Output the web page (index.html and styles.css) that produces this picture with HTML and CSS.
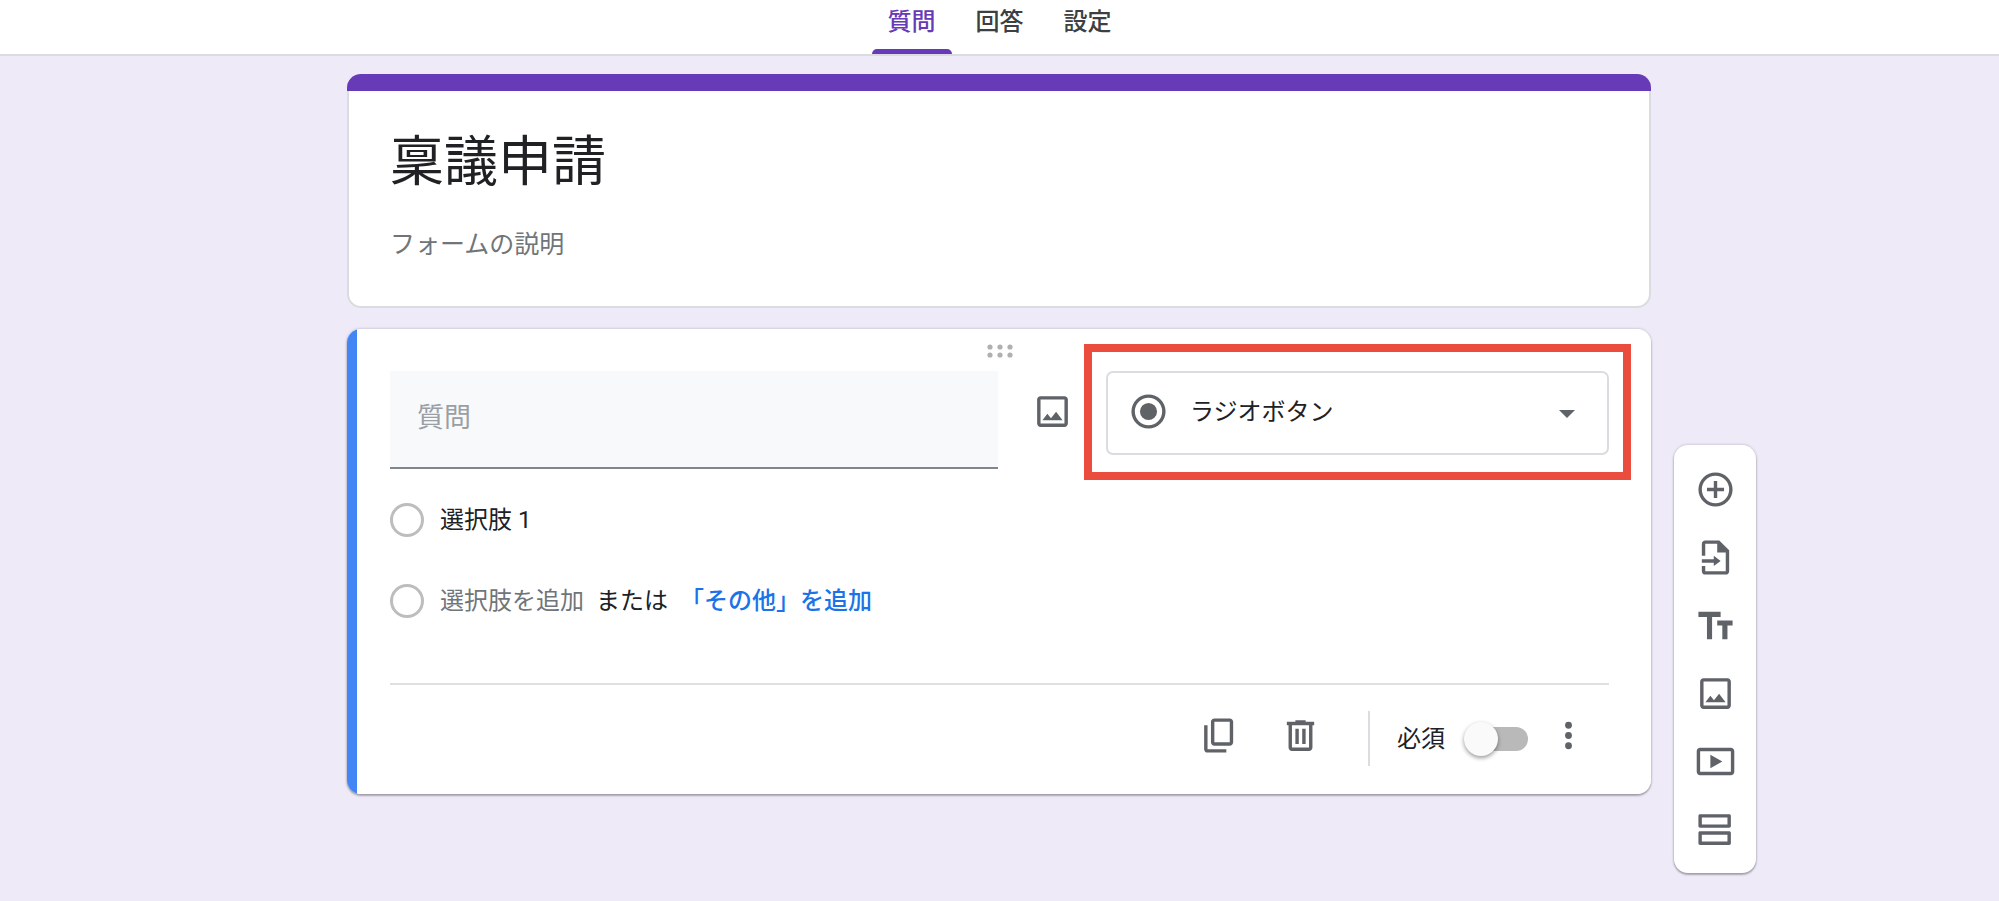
FILE: index.html
```html
<!DOCTYPE html>
<html lang="ja">
<head>
<meta charset="utf-8">
<meta name="viewport" content="width=device-width, initial-scale=1">
<title>稟議申請</title>
<link rel="stylesheet" href="styles.css">
</head>
<body>
<header class="topbar">
  <nav class="tabs">
    <a class="tab tab-active" href="#questions">質問</a>
    <a class="tab" href="#responses">回答</a>
    <a class="tab" href="#settings">設定</a>
  </nav>
</header>

<main class="editor">
  <section class="card title-card">
    <div class="title-stripe"></div>
    <div class="title-body">
      <h1 class="form-title">稟議申請</h1>
      <input class="form-description" type="text" placeholder="フォームの説明" aria-label="フォームの説明">
    </div>
  </section>

  <section class="card question-card">
    <svg class="drag-handle" viewBox="0 0 26 14" aria-hidden="true">
      <circle cx="3" cy="3" r="2.6"/><circle cx="13" cy="3" r="2.6"/><circle cx="23" cy="3" r="2.6"/>
      <circle cx="3" cy="11" r="2.6"/><circle cx="13" cy="11" r="2.6"/><circle cx="23" cy="11" r="2.6"/>
    </svg>

    <div class="question-row">
      <input class="question-input" type="text" placeholder="質問" aria-label="質問">
      <button class="icon-button image-button" type="button" aria-label="画像を追加">
        <svg class="icon" viewBox="0 0 24 24"><path d="M19 5v14H5V5h14m0-2H5c-1.1 0-2 .9-2 2v14c0 1.1.9 2 2 2h14c1.1 0 2-.9 2-2V5c0-1.1-.9-2-2-2zM14.1 12.2l-3 3.8L9 13.3 6.1 17.1h11.8z"/></svg>
      </button>
      <div class="type-field">
        <select class="type-select" aria-label="質問の形式">
          <option>ラジオボタン</option>
        </select>
        <svg class="icon type-icon" viewBox="0 0 24 24" aria-hidden="true"><path d="M12 2a10 10 0 1 0 0 20 10 10 0 0 0 0-20zm0 18a8 8 0 1 1 0-16 8 8 0 0 1 0 16z"/><circle cx="12" cy="12" r="5"/></svg>
        <svg class="type-caret" viewBox="0 0 16 8" aria-hidden="true"><path d="M0 0h16L8 8z"/></svg>
        <span class="type-highlight"></span>
      </div>
    </div>

    <div class="options">
      <div class="option">
        <input class="option-radio" type="radio" name="option" aria-label="選択肢 1" disabled>
        <input class="option-text" type="text" value="選択肢 1" aria-label="選択肢">
      </div>
      <div class="option">
        <input class="option-radio" type="radio" name="option" aria-label="選択肢を追加" disabled>
        <button class="add-option" type="button">選択肢を追加</button>
        <span>または</span>
        <button class="add-other" type="button">「その他」を追加</button>
      </div>
    </div>

    <footer class="question-footer">
      <button class="icon-button copy-button" type="button" aria-label="コピーを作成">
        <svg class="icon" viewBox="0 0 24 24"><path d="M18 2H9c-1.100 0-2 .9-2 2v12c0 1.100.9 2 2 2h9c1.100 0 2-.9 2-2V4c0-1.100-.9-2-2-2zm0 14H9V4h9v12zM5 6H3v14c0 1.100.9 2 2 2h11v-2H5z"/></svg>
      </button>
      <button class="icon-button delete-button" type="button" aria-label="削除">
        <svg class="icon" viewBox="0 0 24 24"><path d="M15 4V3H9v1H4v2h1v13c0 1.100.9 2 2 2h10c1.100 0 2-.9 2-2V6h1V4h-5zm2 15H7V6h10v13zM9 8h2v9H9zm4 0h2v9h-2z"/></svg>
      </button>
      <span class="footer-divider"></span>
      <label class="required">
        必須
        <input class="switch" type="checkbox" role="switch">
      </label>
      <button class="icon-button" type="button" aria-label="その他のオプション">
        <svg class="icon" viewBox="0 0 24 24"><circle cx="12" cy="6" r="2"/><circle cx="12" cy="12" r="2"/><circle cx="12" cy="18" r="2"/></svg>
      </button>
    </footer>
  </section>

  <aside class="toolbar" aria-label="ツールバー">
    <button class="tool" type="button" aria-label="質問を追加">
      <svg class="icon" viewBox="0 0 24 24"><path d="M13 7h-2v4H7v2h4v4h2v-4h4v-2h-4zM12 2a10 10 0 1 0 0 20 10 10 0 0 0 0-20zm0 18a8 8 0 1 1 0-16 8 8 0 0 1 0 16z"/></svg>
    </button>
    <button class="tool" type="button" aria-label="質問をインポート">
      <svg class="icon" viewBox="0 0 24 24"><path d="M4 11V4c0-1.100.9-2 2-2h8.200L20 7.800V20c0 1.100-.9 2-2 2H6c-1.100 0-2-.9-2-2v-3h2v3h12V9h-5V4H6v7zM4 13h7v-2l4 3-4 3v-2H4z"/></svg>
    </button>
    <button class="tool" type="button" aria-label="タイトルと説明を追加">
      <svg class="icon" viewBox="0 0 24 24"><path d="M2 4v3h5v13h3V7h5V4zM22 9h-9v3h3v8h3v-8h3z"/></svg>
    </button>
    <button class="tool" type="button" aria-label="画像を追加">
      <svg class="icon" viewBox="0 0 24 24"><path d="M19 5v14H5V5h14m0-2H5c-1.100 0-2 .9-2 2v14c0 1.100.9 2 2 2h14c1.100 0 2-.9 2-2V5c0-1.100-.9-2-2-2zM14.100 12.200l-3 3.800L9 13.300 6.100 17.100h11.800z"/></svg>
    </button>
    <button class="tool" type="button" aria-label="動画を追加">
      <svg class="icon" viewBox="0 0 24 24"><path d="M21 4H3c-1.100 0-2 .9-2 2v12c0 1.100.9 2 2 2h18c1.100 0 2-.9 2-2V6c0-1.100-.9-2-2-2zm0 14H3V6h18v12zM9 8v8l7-4z"/></svg>
    </button>
    <button class="tool" type="button" aria-label="セクションを追加">
      <svg class="icon" viewBox="0 0 24 24"><path d="M20 3H3c-.6 0-1 .4-1 1v6c0 .6.4 1 1 1h17c.6 0 1-.4 1-1V4c0-.6-.4-1-1-1zm-1 6H4V5h15zM20 13H3c-.6 0-1 .4-1 1v6c0 .6.4 1 1 1h17c.6 0 1-.4 1-1v-6c0-.6-.4-1-1-1zm-1 6H4v-4h15z"/></svg>
    </button>
  </aside>
</main>
</body>
</html>
```
FILE: styles.css
```css
*,
*::before,
*::after {
  box-sizing: border-box;
}

body {
  margin: 0;
  min-height: 100vh;
  background: #eeeaf8;
  color: #202124;
  font-family: Roboto, "Noto Sans CJK JP", sans-serif;
  font-size: 24px;
  line-height: 32px;
}

button,
input,
select {
  margin: 0;
  padding: 0;
  border: 0;
  background: none;
  color: inherit;
  font: inherit;
}

button {
  cursor: pointer;
}

/* Header tabs */
.topbar {
  background: #fff;
  border-bottom: 2px solid #dadce0;
}

.tabs {
  display: flex;
  justify-content: center;
}

.tab {
  position: relative;
  padding: 6px 20px 16px;
  color: #3c4043;
  font-weight: 500;
  text-decoration: none;
}

.tab-active {
  color: #673ab7;
}

.tab-active::after {
  content: "";
  position: absolute;
  right: 4px;
  bottom: 0;
  left: 4px;
  height: 5px;
  border-radius: 5px 5px 0 0;
  background: #673ab7;
}

/* Page grid: the cards in the middle, the toolbar on the right */
.editor {
  display: grid;
  grid-template-columns: 1fr minmax(0, 1304px) 1fr;
  align-items: start;
  gap: 21px 23px;
  padding: 18px 1px 24px 0;
}

.card {
  grid-column: 2;
  border-radius: 14px;
}

.title-card {
  border: 2px solid #dadce0;
  border-top: 0;
  background: #fff;
}

.title-stripe {
  height: 17px;
  margin: 0 -2px;
  border-radius: 14px 14px 0 0;
  background: #673ab7;
}

.title-body {
  padding: 40px 41px 45px;
}

.form-title {
  margin: 0 0 34px;
  font-size: 54px;
  font-weight: 400;
  line-height: 64px;
}

.form-description {
  display: block;
  width: 100%;
  height: 32px;
  font-size: 25px;
}

.form-description::placeholder {
  color: #70757a;
}

/* Question card */
.question-card {
  padding: 15px 42px 28px 43px;
  background: linear-gradient(to right, #4285f4 10px, #fff 10px);
  box-shadow: 0 2px 2px rgba(0, 0, 0, 0.26), 0 0 2px 1px rgba(60, 64, 67, 0.16);
}

.drag-handle {
  display: block;
  width: 26px;
  height: 14px;
  margin: 0 auto 13px;
  fill: #b0b0b0;
}

.question-row {
  display: grid;
  grid-template-columns: minmax(0, 608fr) 108px minmax(0, 503fr);
  align-items: start;
}

.question-input {
  height: 98px;
  padding: 0 27px 2px;
  border-bottom: 2px solid #80868b;
  background: #f8f9fb;
  font-size: 27px;
}

.question-input::placeholder {
  color: #9a9fa5;
}

.icon {
  display: block;
  width: 41px;
  height: 41px;
  fill: #5f6368;
}

.icon-button {
  display: flex;
  align-items: center;
  justify-content: center;
  height: 49px;
}

.image-button {
  height: 81px;
}

.type-field {
  position: relative;
}

.type-select {
  display: block;
  width: 100%;
  height: 84px;
  padding: 0 56px 2px 82px;
  border: 2px solid #dadce0;
  border-radius: 7px;
  appearance: none;
}

.type-icon {
  position: absolute;
  top: 20px;
  left: 22px;
  pointer-events: none;
}

.type-caret {
  position: absolute;
  top: 39px;
  right: 34px;
  width: 16px;
  height: 8px;
  fill: #5f6368;
  pointer-events: none;
}

.type-highlight {
  position: absolute;
  inset: -27px -22px -25px;
  border: 8px solid #ea4c3d;
  pointer-events: none;
}

/* Options */
.options {
  display: flex;
  flex-direction: column;
  gap: 41px;
  margin: 31px 0 62px;
}

.option {
  display: flex;
  align-items: center;
  gap: 12px;
  height: 40px;
}

.option-radio {
  flex: none;
  width: 34px;
  height: 34px;
  margin-right: 4px;
  border: 3px solid #bdbdbd;
  border-radius: 50%;
  appearance: none;
}

.option-text {
  flex: 1;
  min-width: 0;
}

.add-option {
  color: #70757a;
}

.add-other {
  color: #1a73e8;
  font-weight: 500;
}

/* Footer actions */
.question-footer {
  display: flex;
  justify-content: flex-end;
  padding: 26px 20px 0 0;
  border-top: 2px solid #e0e0e0;
}

.copy-button {
  margin-right: 40px;
}

.delete-button {
  margin-right: 47px;
}

.footer-divider {
  width: 2px;
  height: 55px;
  margin-right: 27px;
  background: #dadce0;
}

.required {
  display: flex;
  align-items: center;
  gap: 20px;
  margin-right: 20px;
}

.switch {
  position: relative;
  width: 63px;
  height: 24px;
  border-radius: 12px;
  background: #b9b9b9;
  appearance: none;
}

.switch::before {
  content: "";
  position: absolute;
  top: -5px;
  left: -1px;
  width: 34px;
  height: 34px;
  border-radius: 50%;
  background: #fafafa;
  box-shadow: 0 2px 4px rgba(0, 0, 0, 0.4);
}

/* Floating toolbar */
.toolbar {
  grid-row: 2;
  grid-column: 3;
  width: 82px;
  margin-top: 116px;
  padding: 10px 0;
  border-radius: 14px;
  background: #fff;
  box-shadow: 0 2px 2px rgba(0, 0, 0, 0.26), 0 0 2px 1px rgba(60, 64, 67, 0.16);
}

.tool {
  display: flex;
  align-items: center;
  justify-content: center;
  width: 100%;
  height: 68px;
}
```
